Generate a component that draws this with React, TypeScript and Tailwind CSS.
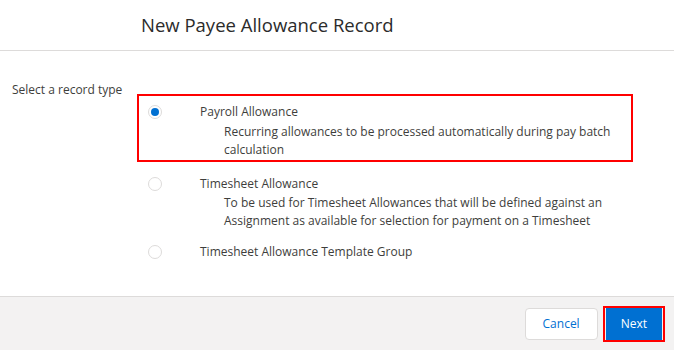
import React from "react";

function Radio({ checked }: { checked?: boolean }) {
  return (
    <span className="flex h-[14px] w-[14px] shrink-0 items-center justify-center rounded-full border border-[#dddbda] bg-white">
      {checked && <span className="h-[8px] w-[8px] rounded-full bg-[#0070d2]" />}
    </span>
  );
}

export default function App() {
  const font = { fontFamily: '"Open Sans", "Noto Sans", sans-serif' };
  return (
    <div className="flex h-[350px] w-[674px] flex-col bg-white text-[#3e3e3c]" style={font}>
      <div className="flex h-[51px] shrink-0 items-center border-b border-[#dddbda] pl-[141px]">
        <h1 className="text-[18.5px] font-normal text-[#2b2b2b]">New Payee Allowance Record</h1>
      </div>
      <div className="flex flex-1 pt-[30px]">
        <div className="w-[137px] shrink-0 pl-[12px] text-[12px] leading-[18px]">Select a record type</div>
        <div className="flex flex-col pt-[13px]">
          <div className="flex w-[496px] border-2 border-[#ff0000] pb-[1px] pl-[9px] pt-[7px]">
            <div className="pt-[2px]"><Radio checked /></div>
            <div className="pl-[38px] text-[12px] leading-[18px]">
              <div>Payroll Allowance</div>
              <div className="mt-[2px] pl-[24px]">Recurring allowances to be processed automatically during pay batch<br />calculation</div>
            </div>
          </div>
          <div className="flex pl-[11px] pt-[13px]">
            <div className="pt-[2px]"><Radio /></div>
            <div className="pl-[38px] text-[12px] leading-[18px]">
              <div>Timesheet Allowance</div>
              <div className="mt-[1px] pl-[24px]">To be used for Timesheet Allowances that will be defined against an<br />Assignment as available for selection for payment on a Timesheet</div>
            </div>
          </div>
          <div className="flex pl-[11px] pt-[13px]">
            <div className="pt-[2px]"><Radio /></div>
            <div className="pl-[38px] text-[12px] leading-[18px]">Timesheet Allowance Template Group</div>
          </div>
        </div>
      </div>
      <div className="flex h-[54px] shrink-0 items-center justify-end gap-[5px] border-t border-[#dddbda] bg-[#f3f2f2] pr-[9px]">
        <button className="h-[32px] rounded-[4px] border border-[#dddbda] bg-white px-[17px] text-[12px] text-[#0070d2]">Cancel</button>
        <button className="h-[36px] border-2 border-[#ff0000] px-[1px]">
          <span className="flex h-[32px] items-center bg-[#0070d2] px-[15px] text-[12px] text-white">Next</span>
        </button>
      </div>
    </div>
  );
}
